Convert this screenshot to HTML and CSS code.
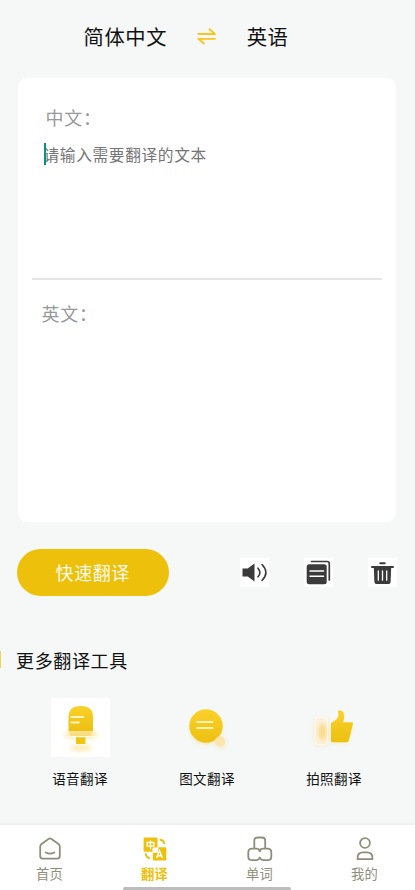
FILE: index.html
```html
<!DOCTYPE html>
<html lang="zh-CN">
<head>
<meta charset="utf-8">
<meta name="viewport" content="width=device-width, initial-scale=1">
<title>翻译</title>
<link rel="stylesheet" href="styles.css">
</head>
<body>
<div class="app">
  <header class="languages">
    <span>简体中文</span>
    <svg class="swap" width="20" height="18" viewBox="0 0 20 18" fill="none" stroke="#f8c51c" stroke-width="1.8" stroke-linecap="round" stroke-linejoin="round"><path d="M1.3 7H18L12.5 2.3M18 11.8H1.3L7 16.5"/></svg>
    <span>英语</span>
  </header>
  <main>
    <section class="card">
      <div class="source">
        <div class="label label-source">中文：</div>
        <div class="entry"><i class="caret"></i><span>请输入需要翻译的文本</span></div>
      </div>
      <div class="result"><div class="label">英文：</div></div>
    </section>
    <section class="actions">
      <button class="translate">快速翻译</button>
      <div class="tools">
        <div class="tool"><svg width="29" height="29" viewBox="0 0 29 29"><path fill="#3b3b3b" d="M2.5 10.5h5.2L14.5 5.5v18l-6.8-5H2.5z"/><path fill="none" stroke="#3b3b3b" stroke-width="1.6" stroke-linecap="round" d="M18 10.2q3.8 4.3 0 8.6M22 6.5q7.8 8 0 16"/></svg></div>
        <div class="tool"><svg width="29" height="29" viewBox="0 0 29 29"><rect x="2.7" y="6.3" width="20" height="20" rx="2.5" fill="#3b3b3b"/><path fill="none" stroke="#3b3b3b" stroke-width="1.7" stroke-linecap="round" d="M7.5 3.5H23q2.3 0 2.3 2.3V22"/><path stroke="#fff" stroke-width="1.5" stroke-linecap="round" d="M6 13.1h13.5M6 18.2h13.5"/></svg></div>
        <div class="tool"><svg width="29" height="29" viewBox="0 0 29 29"><path fill="none" stroke="#3b3b3b" stroke-width="2" stroke-linecap="round" d="M12.3 5.3h4.4M4 9h21"/><path fill="#3b3b3b" d="M5.8 9h17.4l-.6 15q-.1 2-2 2H8.4q-1.9 0-2-2z"/><path stroke="#fff" stroke-width="1.3" stroke-linecap="round" d="M10.3 13v9.2M14.5 13v9.2M18.7 13v9.2"/></svg></div>
      </div>
    </section>
    <h2 class="heading">更多翻译工具</h2>
    <section class="features">
      <div class="feature">
        <svg class="boxed" width="59" height="59" viewBox="0 0 59 59">
          <defs><linearGradient id="gold" x1="0" y1="0" x2="0" y2="1"><stop stop-color="#fbd02a"/><stop offset="1" stop-color="#ecc112"/></linearGradient><filter id="soft" x="-60%" y="-60%" width="220%" height="220%"><feGaussianBlur stdDeviation="2"/></filter></defs>
          <g filter="url(#soft)"><ellipse cx="30" cy="37" rx="17" ry="3.5" fill="#f8d65c" opacity=".6"/><ellipse cx="30" cy="50" rx="11" ry="3" fill="#f8d65c" opacity=".5"/></g>
          <path fill="url(#gold)" d="M17.5 33V19q0-11 12.3-11T42 19v14z"/><path fill="#f5d461" opacity=".6" d="M17.5 33H42l-3 5.5H20z"/>
          <path fill="#efc514" d="M25 39h9.5v7H25z"/><path stroke="#fffbe5" stroke-width="1.2" stroke-linecap="round" d="M14 38.7h32"/><path stroke="#fff4bf" stroke-width="1.8" stroke-linecap="round" d="M20.3 19h12M20.3 24.5h7.5"/>
        </svg>
        <span>语音翻译</span>
      </div>
      <div class="feature">
        <svg width="59" height="59" viewBox="0 0 59 59"><circle cx="28" cy="31" r="16" fill="#f8d65c" opacity=".35" filter="url(#soft)"/><circle cx="28" cy="28" r="16.7" fill="url(#gold)"/><circle cx="43" cy="45" r="6" fill="#f8d88a" opacity=".35" filter="url(#soft)"/><circle cx="42" cy="43.5" r="5" fill="#fae6ac"/><path stroke="#fff2b5" stroke-width="1.9" stroke-linecap="round" d="M19 24h15.5M19 30h15.5"/></svg>
        <span>图文翻译</span>
      </div>
      <div class="feature">
        <svg width="59" height="59" viewBox="0 0 59 59"><rect x="9" y="20" width="15" height="28" rx="5" fill="#f8d8a0" opacity=".45" filter="url(#soft)"/><path fill="#f8d65c" opacity=".4" filter="url(#soft)" d="M27 28h20l-4 17H27z"/><rect x="10" y="19" width="12.5" height="28" rx="4" fill="#fff6e4" fill-opacity=".55" stroke="#fffaf0"/><ellipse cx="17.5" cy="34" rx="3.8" ry="8.5" fill="#fad166" opacity=".75" filter="url(#soft)"/><path fill="url(#gold)" d="M26 25q7.5-3.5 7.5-8.5 0-2.5-.8-3.8 4.2-1.5 5.9 2.3 1.5 3.5-.6 9.3h8.8q1.6 0 1.2 1.6l-4.1 16.4q-.5 2-2.5 2H27.5q-1.5 0-1.5-1.5z"/></svg>
        <span>拍照翻译</span>
      </div>
    </section>
  </main>
  <nav class="tabs">
    <div class="tab"><svg width="26" height="26" viewBox="0 0 26 26" fill="none" stroke="#918d7c" stroke-width="1.8" stroke-linecap="round" stroke-linejoin="round"><path d="M3.2 10.6q0-1.6 1.3-2.6l7-5.1q1.5-1 3 0l7 5.1q1.3 1 1.3 2.6v9.5q0 2.6-2.6 2.6H5.8q-2.6 0-2.6-2.6z"/><path d="M8.7 16.5q4.3 2.3 8.6 0"/></svg><span>首页</span></div>
    <div class="tab active"><svg width="26" height="26" viewBox="0 0 26 26"><path d="M2.8 1.5h11.5q1.2 0 1.2 1.2v8.8h-3.8q-1.2 0-1.2 1.2v3H2.8q-1.2 0-1.2-1.2V2.7q0-1.2 1.2-1.2z" fill="#edc00b"/><path fill="#edc00b" d="M16.3 11.2h6.8q1.2 0 1.2 1.2v10.8q0 1.2-1.2 1.2H12q-1.2 0-1.2-1.2v-6.5h4.3q1.2 0 1.2-1.2z"/><path fill="none" stroke="#fff" stroke-width="1.3" d="M5.2 6.5h6.6v3.6H5.2zM8.5 4.2v9"/><path fill="none" stroke="#fff" stroke-width="1.5" d="m14.7 21.8 2.8-7 2.8 7M15.6 19.7h3.8"/><path fill="none" stroke="#edc00b" stroke-width="1.9" stroke-linecap="round" d="M18.5 3.7q3.1.7 3.7 3.7M3.8 18.3q.6 3 3.3 3.7"/></svg><span>翻译</span></div>
    <div class="tab"><svg width="26" height="26" viewBox="0 0 26 26" fill="none" stroke="#918d7c" stroke-width="1.8" stroke-linejoin="round"><path d="M7.3 12.7V4.8q0-3.3 3.3-3.3h4.3q3.3 0 3.3 3.3v7.9M12.8 14.2q-1.1-1.5-3.3-1.5H5q-3.7 0-3.7 3.7v4q0 3.7 3.7 3.7h4.2q2.5 0 3.6-2.6 1.1 2.6 3.6 2.6h4.2q3.7 0 3.7-3.7v-4q0-3.7-3.7-3.7h-4.5q-2.2 0-3.3 1.5zM11.7 13.3l1.1 2 1.1-2"/></svg><span>单词</span></div>
    <div class="tab"><svg width="26" height="26" viewBox="0 0 26 26" fill="none" stroke="#918d7c" stroke-width="1.8" stroke-linejoin="round"><circle cx="13" cy="7" r="4.9"/><path d="M5.6 23.2v-1.4q0-5.4 5.4-5.4h4q5.4 0 5.4 5.4v1.4z"/></svg><span>我的</span></div>
    <i class="indicator"></i>
  </nav>
</div>
</body>
</html>
```
FILE: styles.css
```css
* { box-sizing: border-box; }
body { margin: 0; font-family: "Noto Sans CJK SC", sans-serif; background: #f5f8f7; color: #111; }
svg { display: block; flex: none; }
.app { display: flex; flex-direction: column; height: 890px; overflow: hidden; }
.languages { display: flex; align-items: center; height: 78px; padding: 0 0 6px 83.5px; font-size: 20.3px; letter-spacing: .6px; }
.swap { margin: 0 29.7px 0 30px; }
main { flex: 1; }
.card { width: 378px; height: 443.5px; margin-left: 18px; padding: 0 14px; border-radius: 9px; background: #fff; }
.source { height: 202px; padding: 25px 0 0 11.5px; border-bottom: 2px solid #e5e5e5; }
.label { height: 28px; font-size: 18px; line-height: 28px; letter-spacing: .7px; color: #999; }
.label-source { padding-left: 2px; }
.entry { display: flex; align-items: center; height: 22px; margin-top: 12px; font-size: 15.7px; letter-spacing: .65px; line-height: 24px; color: #757575; }
.caret { width: 2px; height: 22px; margin-right: -2px; background: #009688; }
.entry span { padding-top: 1px; }
.result { padding: 19px 0 0 9.5px; }
.actions { display: flex; justify-content: space-between; align-items: center; height: 47px; margin: 27.5px 18px 0 17px; }
.translate { width: 151.5px; height: 47px; padding: 0; border: 0; border-radius: 24px; background: #edc00b; color: #fffbe8; font: 18px/47px "Noto Sans CJK SC", sans-serif; letter-spacing: .6px; }
.tools { display: flex; gap: 35px; }
.tool { width: 29px; height: 29px; background: #fff; }
.heading { display: flex; align-items: center; height: 17px; margin: 55px 0 0; padding-left: 15px; border-left: 1px solid #f1d34e; font-size: 18px; font-weight: 400; letter-spacing: .65px; }
.features { display: grid; grid-template-columns: repeat(3, 127px); margin: 30px 0 0 16.5px; }
.feature { display: flex; flex-direction: column; align-items: center; gap: 11px; font-size: 13.5px; line-height: 20px; letter-spacing: .4px; }
.boxed { background: #fff; }
.tabs { position: relative; display: grid; grid-template-columns: repeat(4, 105px); height: 65px; margin-left: -3px; background: #fff; box-shadow: 0 -1px 2px #e9eceb; }
.tab { display: flex; flex-direction: column; align-items: center; padding-top: 11px; gap: 2px; font-size: 13.3px; line-height: 20px; letter-spacing: .3px; color: #918d7c; }
.active { color: #edc00b; font-weight: 700; }
.indicator { position: absolute; left: 126px; bottom: 0; width: 168px; height: 3px; border-radius: 2px; background: #bdbdbd; }
```
